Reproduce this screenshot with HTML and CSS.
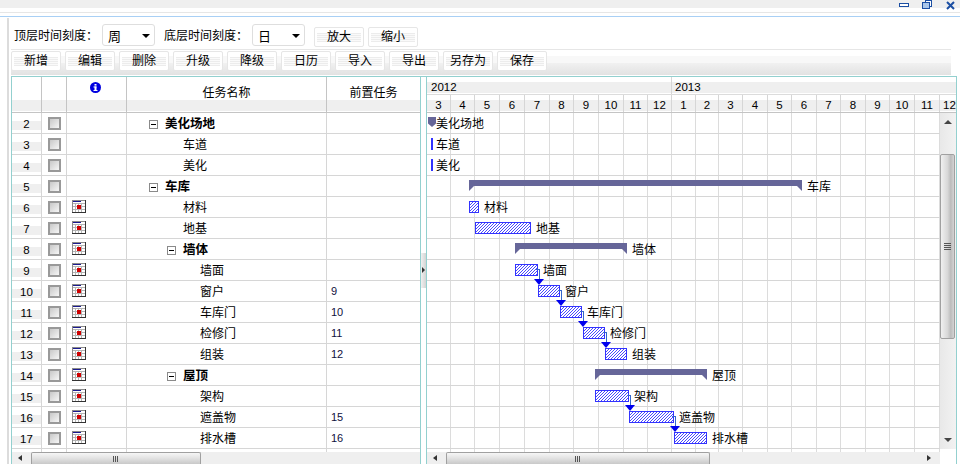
FILE: index.html
```html
<!DOCTYPE html>
<html lang="zh-CN">
<head>
    <meta charset="UTF-8">
    <title>甘特图</title>
    <link rel="stylesheet" href="styles.css">
</head>
<body>
    <svg class="defs" width="0" height="0">
        <symbol id="cal" viewBox="0 0 14 13">
            <rect x="0" y="0" width="14" height="13" fill="#8a8a8a"/>
            <rect x="1" y="1" width="12" height="11" fill="#fff"/>
            <rect x="1" y="1" width="8" height="1" fill="#1a1a90"/>
            <path d="M1 3.5h12M1 6.5h12M1 9.5h12M3.5 3v9M6.5 3v9M9.5 3v9" stroke="#b4b4b4" fill="none"/>
            <rect x="5" y="5" width="4" height="4" fill="#d00000"/>
            <path d="M0 12.5h14M13.5 0v13" stroke="#333" fill="none"/>
        </symbol>
    </svg>

    <!--窗口按钮-->
    <div class="winbar">
        <svg class="winbtns" width="60" height="10" viewBox="0 0 60 10">
            <rect x="2.5" y="3.5" width="9" height="3" fill="#fff" stroke="#1c4fa3"/>
            <rect x="28.5" y="0.5" width="6" height="6" fill="#fff" stroke="#1c4fa3"/>
            <rect x="25.5" y="2.5" width="7" height="6" fill="#a9c6ea" stroke="#1c4fa3"/>
            <path d="M50 2l7 7M57 2l-7 7" stroke="#1c4fa3" stroke-width="2" fill="none"/>
        </svg>
    </div>
    <div class="rule-gray"></div>
    <div class="rule-blue"></div>

    <div class="content">
        <div class="scale-bar">
            <span class="scale-label">顶层时间刻度：</span>
            <div class="combo">周</div>
            <span class="scale-label second">底层时间刻度：</span>
            <div class="combo">日</div>
            <button class="btn zoom-first">放大</button>
            <button class="btn">缩小</button>
        </div>
        <div class="tool-bar">
            <button class="btn">新增</button>
            <button class="btn">编辑</button>
            <button class="btn">删除</button>
            <button class="btn">升级</button>
            <button class="btn">降级</button>
            <button class="btn">日历</button>
            <button class="btn">导入</button>
            <button class="btn">导出</button>
            <button class="btn">另存为</button>
            <button class="btn">保存</button>
        </div>

        <div class="grid">
            <!--左边任务表-->
            <div class="pane-left">
                <table class="tasks">
                    <colgroup>
                        <col class="c-no"><col class="c-chk"><col class="c-ico"><col class="c-name"><col class="c-pre">
                    </colgroup>
                    <thead>
                        <tr>
                            <th></th>
                            <th></th>
                            <th class="th-info">
                                <svg width="11" height="11" viewBox="0 0 11 11">
                                    <circle cx="5.5" cy="5.5" r="5.5" fill="#0000e0"/>
                                    <rect x="4.5" y="2" width="2" height="1.6" fill="#fff"/>
                                    <rect x="3.5" y="4.5" width="3" height="1" fill="#fff"/>
                                    <rect x="4.5" y="4.5" width="2" height="4" fill="#fff"/>
                                    <rect x="3.5" y="8" width="4" height="1" fill="#fff"/>
                                </svg>
                            </th>
                            <th>任务名称</th>
                            <th class="last">前置任务</th>
                        </tr>
                    </thead>
                    <tbody>
                        <tr><td class="no">2</td><td><i class="chk"></i></td><td></td><td class="l0"><i class="minus"></i><b>美化场地</b></td><td></td></tr>
                        <tr><td class="no">3</td><td><i class="chk"></i></td><td></td><td class="leaf1">车道</td><td></td></tr>
                        <tr><td class="no">4</td><td><i class="chk"></i></td><td></td><td class="leaf1">美化</td><td></td></tr>
                        <tr><td class="no">5</td><td><i class="chk"></i></td><td></td><td class="l0"><i class="minus"></i><b>车库</b></td><td></td></tr>
                        <tr><td class="no">6</td><td><i class="chk"></i></td><td class="ico"><svg class="cal"><use href="#cal"/></svg></td><td class="leaf1">材料</td><td></td></tr>
                        <tr><td class="no">7</td><td><i class="chk"></i></td><td class="ico"><svg class="cal"><use href="#cal"/></svg></td><td class="leaf1">地基</td><td></td></tr>
                        <tr><td class="no">8</td><td><i class="chk"></i></td><td class="ico"><svg class="cal"><use href="#cal"/></svg></td><td class="l1"><i class="minus"></i><b>墙体</b></td><td></td></tr>
                        <tr><td class="no">9</td><td><i class="chk"></i></td><td class="ico"><svg class="cal"><use href="#cal"/></svg></td><td class="leaf2">墙面</td><td></td></tr>
                        <tr><td class="no">10</td><td><i class="chk"></i></td><td class="ico"><svg class="cal"><use href="#cal"/></svg></td><td class="leaf2">窗户</td><td class="pre">9</td></tr>
                        <tr><td class="no">11</td><td><i class="chk"></i></td><td class="ico"><svg class="cal"><use href="#cal"/></svg></td><td class="leaf2">车库门</td><td class="pre">10</td></tr>
                        <tr><td class="no">12</td><td><i class="chk"></i></td><td class="ico"><svg class="cal"><use href="#cal"/></svg></td><td class="leaf2">检修门</td><td class="pre">11</td></tr>
                        <tr><td class="no">13</td><td><i class="chk"></i></td><td class="ico"><svg class="cal"><use href="#cal"/></svg></td><td class="leaf2">组装</td><td class="pre">12</td></tr>
                        <tr><td class="no">14</td><td><i class="chk"></i></td><td class="ico"><svg class="cal"><use href="#cal"/></svg></td><td class="l1"><i class="minus"></i><b>屋顶</b></td><td></td></tr>
                        <tr><td class="no">15</td><td><i class="chk"></i></td><td class="ico"><svg class="cal"><use href="#cal"/></svg></td><td class="leaf2">架构</td><td></td></tr>
                        <tr><td class="no">16</td><td><i class="chk"></i></td><td class="ico"><svg class="cal"><use href="#cal"/></svg></td><td class="leaf2">遮盖物</td><td class="pre">15</td></tr>
                        <tr><td class="no">17</td><td><i class="chk"></i></td><td class="ico"><svg class="cal"><use href="#cal"/></svg></td><td class="leaf2">排水槽</td><td class="pre">16</td></tr>
                        <tr class="stub"><td></td><td></td><td></td><td></td><td></td></tr>
                    </tbody>
                </table>
                <div class="hscroll">
                    <i class="arr-l"></i>
                    <div class="thumb thumb-left"><i class="grip"></i></div>
                </div>
            </div>

            <div class="splitter"><div class="handle"><i></i></div></div>

            <!--右边甘特图-->
            <div class="pane-right">
                <div class="years">
                    <div class="year y2012">2012</div>
                    <div class="year y2013">2013</div>
                </div>
                <div class="months">
                    <div class="w24">3</div><div class="w24">4</div><div class="w25">5</div><div class="w25">6</div><div class="w25">7</div><div class="w24">8</div><div class="w25">9</div><div class="w25">10</div><div class="w24">11</div><div class="w24">12</div>
                    <div class="w24">1</div><div class="w23">2</div><div class="w24">3</div><div class="w25">4</div><div class="w24">5</div><div class="w25">6</div><div class="w24">7</div><div class="w25">8</div><div class="w24">9</div><div class="w25">10</div><div class="w25">11</div><div class="w16">12</div>
                </div>
                <div class="body-wrap">
                    <div class="chart-col">
                        <div class="chart">
                            <div class="cols">
                                <i class="w24"></i><i class="w24"></i><i class="w25"></i><i class="w25"></i><i class="w25"></i><i class="w24"></i><i class="w25"></i><i class="w25"></i><i class="w24"></i><i class="w24"></i>
                                <i class="w24"></i><i class="w23"></i><i class="w24"></i><i class="w25"></i><i class="w24"></i><i class="w25"></i><i class="w24"></i><i class="w25"></i><i class="w24"></i><i class="w25"></i><i class="w25"></i>
                            </div>
                            <div class="g-row" style="padding-left:1px"><i class="mark"></i><span class="tight">美化场地</span></div>
                            <div class="g-row" style="padding-left:4px"><i class="tick"></i><span class="near">车道</span></div>
                            <div class="g-row" style="padding-left:4px"><i class="tick"></i><span class="near">美化</span></div>
                            <div class="g-row" style="padding-left:42px"><i class="sum" style="width:333px"></i><span>车库</span></div>
                            <div class="g-row" style="padding-left:42px"><i class="bar" style="width:10px"></i><span>材料</span></div>
                            <div class="g-row" style="padding-left:48px"><i class="bar" style="width:56px"></i><span>地基</span></div>
                            <div class="g-row" style="padding-left:88px"><i class="sum" style="width:112px"></i><span>墙体</span></div>
                            <div class="g-row" style="padding-left:88px"><i class="bar link" style="width:23px"></i><span>墙面</span></div>
                            <div class="g-row" style="padding-left:111px"><i class="bar link" style="width:22px"></i><span>窗户</span></div>
                            <div class="g-row" style="padding-left:133px"><i class="bar link" style="width:22px"></i><span>车库门</span></div>
                            <div class="g-row" style="padding-left:156px"><i class="bar link" style="width:22px"></i><span>检修门</span></div>
                            <div class="g-row" style="padding-left:178px"><i class="bar" style="width:22px"></i><span>组装</span></div>
                            <div class="g-row" style="padding-left:168px"><i class="sum" style="width:112px"></i><span>屋顶</span></div>
                            <div class="g-row" style="padding-left:168px"><i class="bar link" style="width:34px"></i><span>架构</span></div>
                            <div class="g-row" style="padding-left:202px"><i class="bar link" style="width:45px"></i><span>遮盖物</span></div>
                            <div class="g-row" style="padding-left:247px"><i class="bar" style="width:33px"></i><span>排水槽</span></div>
                        </div>
                        <div class="hscroll">
                            <i class="arr-l"></i>
                            <div class="thumb thumb-right"><i class="grip"></i></div>
                            <i class="arr-r"></i>
                        </div>
                    </div>
                    <div class="vscroll">
                        <i class="arr-u"></i>
                        <div class="vthumb"><i class="vgrip"></i></div>
                        <i class="arr-d"></i>
                    </div>
                </div>
            </div>
        </div>
    </div>
</body>
</html>
```

FILE: styles.css
```css
*{
    margin: 0;
    padding: 0;
    box-sizing: border-box;
}

html,body{
    height: 464px;
    overflow: hidden;
    background: #fff;
}

body{
    font-family: "Noto Sans CJK SC", "Liberation Sans", sans-serif;
    font-size: 12px;
    color: #000;
}

.defs{
    position: absolute;
}

i{
    display: block;
}

/* window strip */
.winbar{
    height: 8px;
    background: #efefef;
    display: flex;
    justify-content: flex-end;
    padding-right: 3px;
}

.winbtns{
    flex: none;
}

.rule-gray{
    height: 1px;
    margin-top: 4px;
    background: #e6e6e6;
}

.rule-blue{
    height: 1px;
    margin-top: 3px;
    background: #a9d0f5;
}

.content{
    margin: 1px 0 0 7px;
    border-left: 2px solid #dcdcdc;
    padding: 6px 0 0 2px;
    height: 446px;
    width: 950px;
}

/* toolbars */
.scale-bar{
    display: flex;
    align-items: center;
    height: 22px;
    margin-bottom: 3px;
}

.scale-label{
    width: 88px;
    margin-left: 3px;
    line-height: 20px;
}

.scale-label.second{
    width: 88px;
    margin-left: 9px;
}

.combo{
    position: relative;
    width: 53px;
    height: 22px;
    line-height: 21px;
    padding-left: 5px;
    border: 1px solid #dedede;
    border-radius: 3px;
    font-size: 13px;
}

.combo::after{
    content: "";
    position: absolute;
    right: 4px;
    top: 9px;
    border-left: 4px solid transparent;
    border-right: 4px solid transparent;
    border-top: 4px solid #000;
}

.btn{
    width: 50px;
    height: 20px;
    padding-bottom: 2px;
    border: 1px solid #e6e6e6;
    border-radius: 2px;
    font: inherit;
    line-height: 16px;
    color: #000;
    background-color: #fff;
    background-image: repeating-linear-gradient(0deg, #ececec 0 1px, #fafafa 1px 2px);
    background-repeat: no-repeat;
    background-position: 2px 5px;
    background-size: 44px 9px;
    margin-left: 4px;
}

.scale-bar .btn{
    align-self: flex-end;
    margin-bottom: -1px;
}

.scale-bar .zoom-first{
    margin-left: 9px;
}

.tool-bar{
    display: flex;
    height: 27px;
    padding-top: 1px;
    border-top: 1px solid #e6e6e6;
    width: 940px;
    background: linear-gradient(#fff 0 6px, #f8f8f8 6px 13px, #f1f1f1 13px, #e2e2e2 25px, #fff 25px);
}

.tool-bar .btn:first-child{
    margin-left: 0;
}

/* main grid */
.grid{
    display: flex;
    width: 946px;
    height: 388px;
    border: 1px solid #93d0cf;
    border-bottom: 0;
}

.pane-left{
    width: 408px;
    flex: none;
}

.tasks{
    table-layout: fixed;
    width: 408px;
    border-collapse: separate;
    border-spacing: 0;
}

.c-no{ width: 30px; }
.c-chk{ width: 25px; }
.c-ico{ width: 60px; }
.c-name{ width: 200px; }
.c-pre{ width: 93px; }

.tasks th{
    height: 36px;
    font-weight: normal;
    border-right: 1px solid #c4c4c4;
    border-bottom: 1px solid #c4c4c4;
    background: linear-gradient(#fff 0 23px, #efefef 23px 34px, #fff 34px);
    line-height: 28px;
    padding-bottom: 6px;
    vertical-align: middle;
}

.tasks th.last{
    border-right: 0;
}

.tasks th.th-info{
    vertical-align: top;
    padding: 5px 0 0;
    line-height: 11px;
}

.tasks th svg{
    display: block;
    margin: 0 auto;
    position: relative;
    left: -1px;
}

.tasks td{
    height: 21px;
    line-height: 19px;
    padding: 0;
    border-right: 1px solid #d6d6d6;
    border-bottom: 1px solid #d6d6d6;
    vertical-align: top;
    white-space: nowrap;
}

.tasks td:last-child{
    border-right: 0;
}

.tasks .stub td{
    height: 3px;
    line-height: 0;
    border-bottom: 0;
}

.tasks .no{
    text-align: center;
    font-family: "Liberation Sans", sans-serif;
    font-size: 11.5px;
    line-height: 18px;
    padding-top: 2px;
    background: linear-gradient(#fff 0 8px, #efefef 8px 17px, #fff 17px);
}

.chk{
    width: 13px;
    height: 13px;
    margin: 4px 0 0 6px;
    border: 2px solid #999;
    background: linear-gradient(135deg, #c8c8c8, #f6f6f6);
}

.tasks .ico{
    padding: 3px 0 0 5px;
}

.cal{
    display: block;
    width: 14px;
    height: 13px;
}

.tasks .l0{ padding-left: 22px; }
.tasks .l1{ padding-left: 40px; }
.tasks .leaf1{ padding-left: 56px; }
.tasks .leaf2{ padding-left: 73px; }

.tasks b{
    font-size: 12.5px;
}

.minus{
    display: inline-block;
    position: relative;
    width: 9px;
    height: 9px;
    margin-right: 7px;
    border: 1px solid #8a8a8a;
    background: #fff;
    vertical-align: -1px;
}

.minus::after{
    content: "";
    position: absolute;
    left: 1px;
    top: 3px;
    width: 5px;
    height: 1px;
    background: #000;
}

.tasks .pre{
    padding-left: 4px;
    line-height: 20px;
    font-family: "Liberation Sans", sans-serif;
    font-size: 11px;
    color: #101040;
}

/* scrollbars */
.hscroll{
    position: relative;
    height: 12px;
    background: #efefef;
}

.thumb{
    position: absolute;
    top: 0;
    height: 13px;
    border: 1px solid #a0a0a0;
    border-bottom: 0;
    border-radius: 2px 2px 0 0;
    background: linear-gradient(#f6f6f6, #e4e4e4 40%, #c4c4c4);
}

.thumb-left{
    left: 19px;
    width: 170px;
}

.thumb-right{
    left: 19px;
    width: 264px;
}

.grip{
    width: 6px;
    height: 6px;
    margin: 3px auto 0;
    background: repeating-linear-gradient(90deg, #555 0 1px, transparent 1px 2px);
}

.arr-l,.arr-r,.arr-u,.arr-d{
    position: absolute;
}

.arr-l{
    left: 6px;
    top: 3px;
    border-top: 3px solid transparent;
    border-bottom: 3px solid transparent;
    border-right: 4px solid #333;
}

.arr-r{
    left: 500px;
    top: 3px;
    border-top: 3px solid transparent;
    border-bottom: 3px solid transparent;
    border-left: 4px solid #333;
}

/* splitter between table and chart */
.splitter{
    width: 7px;
    flex: none;
    border-left: 1px solid #93d0cf;
    border-right: 1px solid #93d0cf;
    padding-top: 176px;
}

.handle{
    width: 5px;
    height: 35px;
    background: linear-gradient(90deg, #f0f0f0, #d4d4d4);
    padding: 14px 0 0 1px;
}

.handle i{
    border-top: 3px solid transparent;
    border-bottom: 3px solid transparent;
    border-left: 3px solid #333;
    width: 0;
}

/* chart header */
.pane-right{
    width: 529px;
    flex: none;
}

.years{
    display: flex;
    height: 18px;
    border-bottom: 1px solid #dcdcdc;
    background: linear-gradient(#fff 0 5px, #efefef 5px 16px, #fff 16px);
    font-family: "Liberation Sans", sans-serif;
    font-size: 11.5px;
    line-height: 21px;
}

.year{
    padding-left: 4px;
}

.y2012{
    width: 245px;
    border-right: 1px solid #d6d6d6;
}

.y2013{
    padding-left: 3px;
}

.months{
    display: flex;
    height: 18px;
    border-bottom: 1px solid #c4c4c4;
    background: linear-gradient(#fff 0 5px, #efefef 5px 16px, #fff 16px);
    font-family: "Liberation Sans", sans-serif;
    font-size: 11.5px;
    line-height: 20px;
    text-align: center;
}

.months div{
    border-right: 1px solid #d6d6d6;
    white-space: nowrap;
}

.months div:last-child{
    border-right: 0;
    padding-left: 3px;
}

.w16{ width: 16px; flex: none; }
.w23{ width: 23px; flex: none; }
.w24{ width: 24px; flex: none; }
.w25{ width: 25px; flex: none; }

/* chart body */
.body-wrap{
    display: flex;
}

.chart-col{
    width: 513px;
    flex: none;
}

.chart{
    position: relative;
    height: 339px;
    overflow: hidden;
}

.cols{
    position: absolute;
    left: 0;
    top: 0;
    bottom: 0;
    display: flex;
}

.cols i{
    border-right: 1px solid #dcdcdc;
}

.g-row{
    position: relative;
    display: flex;
    align-items: flex-start;
    height: 21px;
    border-bottom: 1px solid #d6d6d6;
    line-height: 20px;
    white-space: nowrap;
}

.g-row span{
    margin-left: 5px;
}

.g-row span.tight{
    margin-left: 0;
}

.g-row span.near{
    margin-left: 3px;
}

/* hatch is a 3px tile so the diagonal stays on whole pixels */
.bar{
    position: relative;
    flex: none;
    height: 12px;
    margin-top: 4px;
    border: 1px solid #3333ff;
    background: #fff url("data:image/svg+xml,%3Csvg xmlns='http://www.w3.org/2000/svg' width='3' height='3' shape-rendering='crispEdges'%3E%3Cpath fill='%234848ff' d='M2 0h1v1H2zM1 1h1v1H1zM0 2h1v1H0z'/%3E%3C/svg%3E") 0 0 / 3px 3px;
}

.link::before{
    content: "";
    position: absolute;
    right: -3px;
    top: 4px;
    width: 3px;
    height: 10px;
    border-top: 1px solid #3366cc;
    border-right: 1px solid #3366cc;
}

.link::after{
    content: "";
    position: absolute;
    right: -7px;
    top: 14px;
    border-left: 5px solid transparent;
    border-right: 5px solid transparent;
    border-top: 6px solid #0000ee;
    z-index: 1;
}

.sum{
    position: relative;
    flex: none;
    height: 6px;
    margin-top: 4px;
    margin-bottom: 5px;
    background: #666699;
}

.sum::before,.sum::after{
    content: "";
    position: absolute;
    top: 6px;
    border-top: 5px solid #666699;
}

.sum::before{
    left: 0;
    border-right: 5px solid transparent;
}

.sum::after{
    right: 0;
    border-left: 5px solid transparent;
}

.mark{
    flex: none;
    width: 8px;
    height: 10px;
    margin-top: 4px;
    background: #666699;
    clip-path: polygon(0 0, 100% 0, 100% 65%, 50% 100%, 0 65%);
}

.tick{
    flex: none;
    width: 2px;
    height: 12px;
    margin-top: 4px;
    background: #3333ff;
}

/* vertical scrollbar */
.vscroll{
    position: relative;
    width: 16px;
    height: 336px;
    background: linear-gradient(90deg, #e8e8e8, #f2f2f2);
}

.arr-u{
    left: 4px;
    top: 7px;
    border-left: 4px solid transparent;
    border-right: 4px solid transparent;
    border-bottom: 4px solid #444;
}

.arr-d{
    left: 4px;
    bottom: 7px;
    border-left: 4px solid transparent;
    border-right: 4px solid transparent;
    border-top: 4px solid #444;
}

.vthumb{
    position: absolute;
    left: 0;
    top: 41px;
    width: 15px;
    height: 185px;
    border: 1px solid #a0a0a0;
    border-radius: 2px;
    background: linear-gradient(90deg, #f0f0f0, #d8d8d8 50%, #bcbcbc 75%, #d4d4d4);
}

.vgrip{
    width: 7px;
    height: 7px;
    margin: 88px auto 0;
    background: repeating-linear-gradient(0deg, #555 0 1px, transparent 1px 2px);
}
```
